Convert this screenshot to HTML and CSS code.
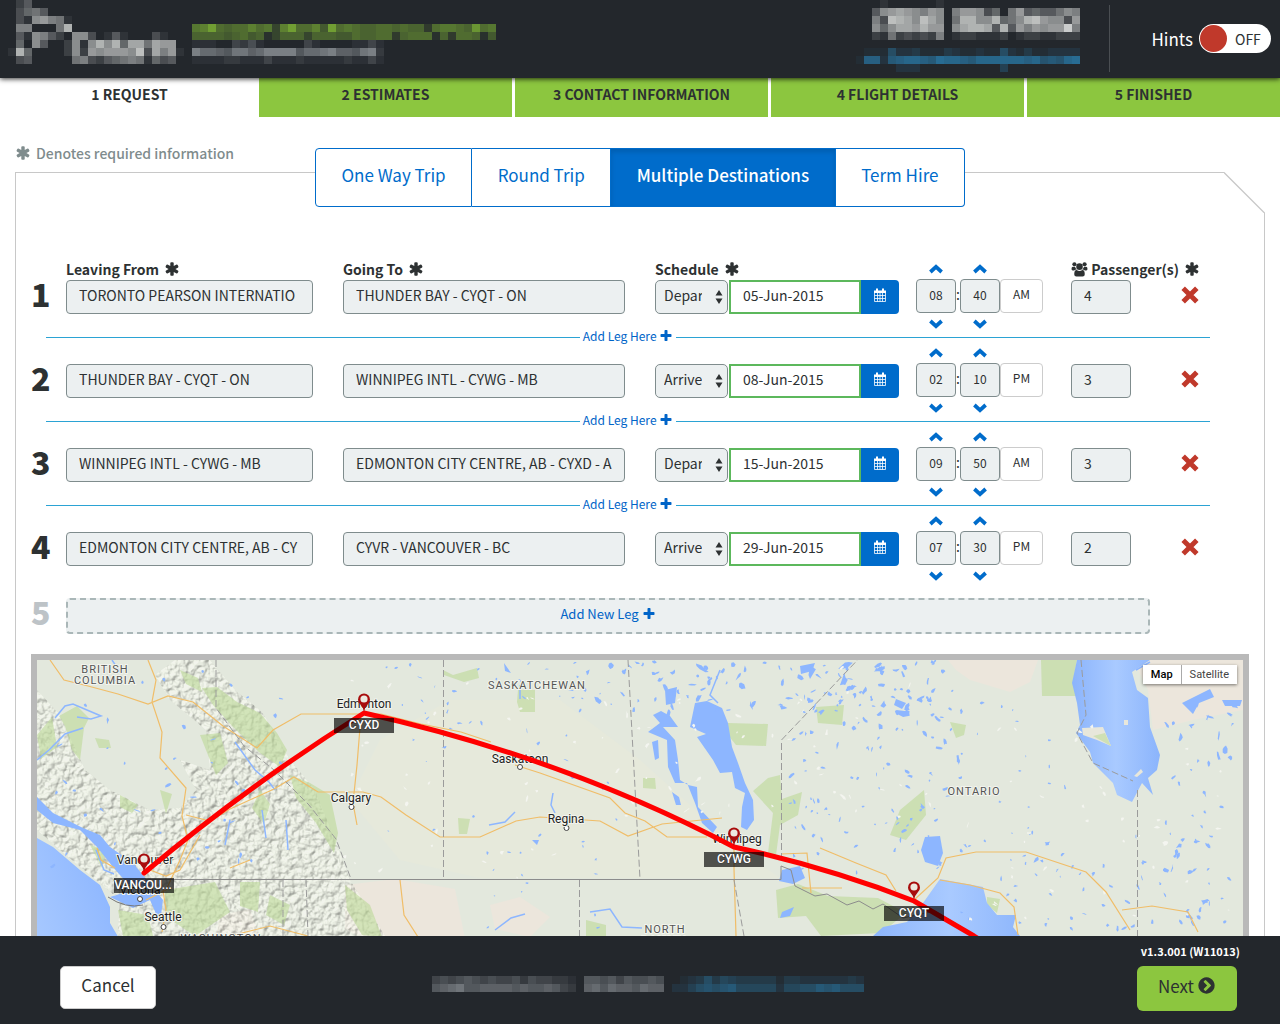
FILE: index.html
```html
<!DOCTYPE html>
<html lang="en">
<head>
<meta charset="utf-8">
<meta name="viewport" content="width=device-width, initial-scale=1">
<title>Flight request</title>
<link rel="stylesheet" href="styles.css">
</head>
<body>
<svg class="sprite" aria-hidden="true">
  <symbol id="asterisk" viewBox="0 0 1792 1792"><path d="M1546 1050q46 26 59.500 77.500t-12.500 97.500l-64 110q-26 46-77.500 59.500t-97.500-12.500l-266-153v307q0 52-38 90t-90 38h-128q-52 0-90-38t-38-90v-307l-266 153q-46 26-97.500 12.500t-77.500-59.500l-64-110q-26-46-12.500-97.500t59.500-77.500l266-154-266-154q-46-26-59.500-77.500t12.500-97.500l64-110q26-46 77.500-59.500t97.500 12.500l266 153v-307q0-52 38-90t90-38h128q52 0 90 38t38 90v307l266-153q46-26 97.500-12.500t77.500 59.500l64 110q26 46 12.500 97.500t-59.500 77.500l-266 154z"/></symbol>
  <symbol id="plus" viewBox="0 0 1792 1792"><path d="M1600 736v192q0 40-28 68t-68 28h-416v416q0 40-28 68t-68 28h-192q-40 0-68-28t-28-68v-416h-416q-40 0-68-28t-28-68v-192q0-40 28-68t68-28h416v-416q0-40 28-68t68-28h192q40 0 68 28t28 68v416h416q40 0 68 28t28 68z"/></symbol>
  <symbol id="remove" viewBox="0 0 16 16"><path d="M3.500 3.500l9 9M12.500 3.500l-9 9" fill="none" stroke="currentColor" stroke-width="4.400" stroke-linecap="square"/></symbol>
  <symbol id="up" viewBox="0 0 12 8"><path d="M1.500 6.400L6 2.300l4.500 4.100" fill="none" stroke="currentColor" stroke-width="3"/></symbol>
  <symbol id="down" viewBox="0 0 12 8"><path d="M1.500 1.600L6 5.700l4.500-4.100" fill="none" stroke="currentColor" stroke-width="3"/></symbol>
  <symbol id="sorter" viewBox="0 0 8 16"><path d="M4 1l3.500 5.500h-7zM4 15l3.500-5.500h-7z"/></symbol>
  <symbol id="calendar" viewBox="0 0 14 15"><path d="M1.500 4v9.500h11V4M1.500 7.500h11M1.500 10.500h11M4.500 4.500v9M7 4.500v9M9.500 4.500v9" fill="none" stroke="currentColor" stroke-width=".8"/><path d="M1 2.500h12v2.500H1zM3 .5h2v3H3zM9 .5h2v3H9z"/></symbol>
  <symbol id="people" viewBox="0 0 18 17"><circle cx="9" cy="6" r="3.500"/><circle cx="3.600" cy="3.500" r="2.200"/><circle cx="14.400" cy="3.500" r="2.200"/><path d="M4.200 6q.8 2.300 2 3-2 0-2.900 1H1.800Q.5 10 .5 8.500.5 6 2 6zM13.800 6q-.8 2.300-2 3 2 0 2.900 1h1.500q1.300 0 1.300-1.500Q17.500 6 16 6zM6 9.500q3 2 6 0 2.600 0 2.600 4.500 0 2.500-2.300 2.500H5.700q-2.300 0-2.300-2.500 0-4.500 2.600-4.500z"/></symbol>
  <symbol id="next" viewBox="0 0 1792 1792"><path d="M845 1395l454-454q19-19 19-45t-19-45l-454-454q-19-19-45-19t-45 19l-102 102q-19 19-19 45t19 45l307 307-307 307q-19 19-19 45t19 45l102 102q19 19 45 19t45-19zm819-499q0 209-103 385.500t-279.500 279.500-385.500 103-385.500-103-279.500-279.500-103-385.500 103-385.500 279.500-279.500 385.500-103 385.500 103 279.500 279.500 103 385.500z"/></symbol>
</svg>

<header class="topbar">
  <svg class="mosaic pale" width="176" height="64" data-rows="0240000000000000000000/0356400000000000000000/0318976100000000000000/0770006b00000000000000/041874208830141000310/05084002818b8b5aa6a99/1b50000282989998c3a791/034000006732456761534"></svg>
  <div class="brand">
    <svg class="mosaic green" width="304" height="16" data-rows="89c767797839c7795c78766776766278876b78797/66665675613666366655766772677716277615"></svg>
    <svg class="mosaic steel" width="192" height="24" data-rows="111003241000003100001131/977658867999957789665892/111122111311121111121131"></svg>
  </div>
  <div class="contact">
    <svg class="mosaic pale" width="208" height="40" data-rows="01000000100000000000000000/489a9879807998350694544687/73cba8ca806bb88b568bc98839/858aa9b9908abba4b4979899d7/21623232701221112012211222"></svg>
    <svg class="mosaic blue" width="224" height="24" data-rows="0111622311132112116213112222/199289aa98baa98aaaaaa9a787ab/0000022200000000004000000000"></svg>
  </div>
  <div class="hints">
    <label for="hints">Hints</label>
    <label class="switch"><input type="checkbox" id="hints"><span>OFF</span></label>
  </div>
</header>

<nav class="steps">
  <a class="step current" href="#request">1 REQUEST</a>
  <a class="step" href="#estimates">2 ESTIMATES</a>
  <a class="step" href="#contact">3 CONTACT INFORMATION</a>
  <a class="step" href="#details">4 FLIGHT DETAILS</a>
  <a class="step" href="#finished">5 FINISHED</a>
</nav>

<main>
  <p class="required"><svg class="icon"><use href="#asterisk"/></svg>Denotes required information</p>
  <section class="panel">
    <svg class="corner" viewBox="0 0 41 41"><path d="M0 0H41V41z" fill="#fff"/><path d="M0 .5L40.500 41" fill="none" stroke="#c8c8c8" stroke-width="1.300"/></svg>
    <div class="tabs">
      <button type="button">One Way Trip</button>
      <button type="button">Round Trip</button>
      <button type="button" class="active">Multiple Destinations</button>
      <button type="button">Term Hire</button>
    </div>

    <form class="legs">
      <div class="leg">
        <strong class="num">1</strong>
        <div class="field"><label for="from1">Leaving From <svg class="icon"><use href="#asterisk"/></svg></label><input id="from1" type="text" value="TORONTO PEARSON INTERNATIO"></div>
        <div class="field"><label for="to1">Going To <svg class="icon"><use href="#asterisk"/></svg></label><input id="to1" type="text" value="THUNDER BAY - CYQT - ON"></div>
        <div class="when">
          <div class="schedule"><label for="date1">Schedule <svg class="icon"><use href="#asterisk"/></svg></label>
            <div class="row"><span class="pick"><select aria-label="Depart or arrive"><option>Depart</option><option>Arrive</option></select><svg><use href="#sorter"/></svg></span><input id="date1" class="date" type="text" value="05-Jun-2015"><button type="button" class="cal" aria-label="Open calendar"><svg><use href="#calendar"/></svg></button></div></div>
          <div class="time">
            <div class="spin"><button type="button" aria-label="Hour up"><svg><use href="#up"/></svg></button><input type="text" aria-label="Hour" value="08"><button type="button" aria-label="Hour down"><svg><use href="#down"/></svg></button></div>
            <span class="colon">:</span>
            <div class="spin"><button type="button" aria-label="Minute up"><svg><use href="#up"/></svg></button><input type="text" aria-label="Minute" value="40"><button type="button" aria-label="Minute down"><svg><use href="#down"/></svg></button></div>
            <button type="button" class="ampm">AM</button>
          </div>
        </div>
        <div class="pax"><label for="pax1"><svg class="people"><use href="#people"/></svg> Passenger(s) <svg class="icon"><use href="#asterisk"/></svg></label><div class="row"><input id="pax1" type="text" value="4"><button type="button" class="remove" aria-label="Remove leg"><svg><use href="#remove"/></svg></button></div></div>
      </div>
      <div class="insert"><button type="button">Add Leg Here <svg class="plus"><use href="#plus"/></svg></button></div>

      <div class="leg">
        <strong class="num">2</strong>
        <div class="field"><input type="text" aria-label="Leaving from" value="THUNDER BAY - CYQT - ON"></div>
        <div class="field"><input type="text" aria-label="Going to" value="WINNIPEG INTL - CYWG - MB"></div>
        <div class="when">
          <div class="schedule">
            <div class="row"><span class="pick"><select aria-label="Depart or arrive"><option>Depart</option><option selected>Arrive</option></select><svg><use href="#sorter"/></svg></span><input class="date" type="text" aria-label="Date" value="08-Jun-2015"><button type="button" class="cal" aria-label="Open calendar"><svg><use href="#calendar"/></svg></button></div></div>
          <div class="time">
            <div class="spin"><button type="button" aria-label="Hour up"><svg><use href="#up"/></svg></button><input type="text" aria-label="Hour" value="02"><button type="button" aria-label="Hour down"><svg><use href="#down"/></svg></button></div>
            <span class="colon">:</span>
            <div class="spin"><button type="button" aria-label="Minute up"><svg><use href="#up"/></svg></button><input type="text" aria-label="Minute" value="10"><button type="button" aria-label="Minute down"><svg><use href="#down"/></svg></button></div>
            <button type="button" class="ampm">PM</button>
          </div>
        </div>
        <div class="pax"><div class="row"><input type="text" aria-label="Passengers" value="3"><button type="button" class="remove" aria-label="Remove leg"><svg><use href="#remove"/></svg></button></div></div>
      </div>
      <div class="insert"><button type="button">Add Leg Here <svg class="plus"><use href="#plus"/></svg></button></div>

      <div class="leg">
        <strong class="num">3</strong>
        <div class="field"><input type="text" aria-label="Leaving from" value="WINNIPEG INTL - CYWG - MB"></div>
        <div class="field"><input type="text" aria-label="Going to" value="EDMONTON CITY CENTRE, AB - CYXD - AB"></div>
        <div class="when">
          <div class="schedule">
            <div class="row"><span class="pick"><select aria-label="Depart or arrive"><option>Depart</option><option>Arrive</option></select><svg><use href="#sorter"/></svg></span><input class="date" type="text" aria-label="Date" value="15-Jun-2015"><button type="button" class="cal" aria-label="Open calendar"><svg><use href="#calendar"/></svg></button></div></div>
          <div class="time">
            <div class="spin"><button type="button" aria-label="Hour up"><svg><use href="#up"/></svg></button><input type="text" aria-label="Hour" value="09"><button type="button" aria-label="Hour down"><svg><use href="#down"/></svg></button></div>
            <span class="colon">:</span>
            <div class="spin"><button type="button" aria-label="Minute up"><svg><use href="#up"/></svg></button><input type="text" aria-label="Minute" value="50"><button type="button" aria-label="Minute down"><svg><use href="#down"/></svg></button></div>
            <button type="button" class="ampm">AM</button>
          </div>
        </div>
        <div class="pax"><div class="row"><input type="text" aria-label="Passengers" value="3"><button type="button" class="remove" aria-label="Remove leg"><svg><use href="#remove"/></svg></button></div></div>
      </div>
      <div class="insert"><button type="button">Add Leg Here <svg class="plus"><use href="#plus"/></svg></button></div>

      <div class="leg">
        <strong class="num">4</strong>
        <div class="field"><input type="text" aria-label="Leaving from" value="EDMONTON CITY CENTRE, AB - CY"></div>
        <div class="field"><input type="text" aria-label="Going to" value="CYVR - VANCOUVER - BC"></div>
        <div class="when">
          <div class="schedule">
            <div class="row"><span class="pick"><select aria-label="Depart or arrive"><option>Depart</option><option selected>Arrive</option></select><svg><use href="#sorter"/></svg></span><input class="date" type="text" aria-label="Date" value="29-Jun-2015"><button type="button" class="cal" aria-label="Open calendar"><svg><use href="#calendar"/></svg></button></div></div>
          <div class="time">
            <div class="spin"><button type="button" aria-label="Hour up"><svg><use href="#up"/></svg></button><input type="text" aria-label="Hour" value="07"><button type="button" aria-label="Hour down"><svg><use href="#down"/></svg></button></div>
            <span class="colon">:</span>
            <div class="spin"><button type="button" aria-label="Minute up"><svg><use href="#up"/></svg></button><input type="text" aria-label="Minute" value="30"><button type="button" aria-label="Minute down"><svg><use href="#down"/></svg></button></div>
            <button type="button" class="ampm">PM</button>
          </div>
        </div>
        <div class="pax"><div class="row"><input type="text" aria-label="Passengers" value="2"><button type="button" class="remove" aria-label="Remove leg"><svg><use href="#remove"/></svg></button></div></div>
      </div>

      <div class="newleg">
        <strong class="num">5</strong>
        <button type="button">Add New Leg <svg class="plus"><use href="#plus"/></svg></button>
      </div>
    </form>

    <div class="map">
      <svg class="chart" viewBox="37 660 1206 400" preserveAspectRatio="xMidYMin slice" role="img" aria-label="Route map">
        <defs>
          <filter id="relief" x="0" y="0" width="1" height="1" color-interpolation-filters="sRGB"><feTurbulence type="fractalNoise" baseFrequency=".15" numOctaves="3" seed="4"/><feColorMatrix values="0 0 0 0 0 0 0 0 0 0 0 0 0 0 0 1.500 0 0 0 0"/><feDiffuseLighting surfaceScale="2" diffuseConstant="1.080" lighting-color="#f2f5ea"><feDistantLight azimuth="225" elevation="64"/></feDiffuseLighting><feComposite in2="SourceGraphic" operator="in"/></filter>
          <linearGradient id="sea" x1="1" y1="0" x2="0" y2="1"><stop offset="0" stop-color="#86b1ff"/><stop offset="1" stop-color="#b3d1ff"/></linearGradient>
          <linearGradient id="bay"><stop offset="0" stop-color="#8bb4fc"/><stop offset=".5" stop-color="#a9caff"/><stop offset="1" stop-color="#8bb4fc"/></linearGradient>
          <g id="pin"><path d="M0 0Q-1-5-4-8A6 6 0 1 1 4-8Q1-5 0 0z" fill="#a80d0d"/><circle cy="-13" r="3.600" fill="#ece9e0"/></g>
        </defs>
        <rect x="37" y="660" width="1206" height="400" fill="#e3e8dd"/>
        <path d="M380 740L450 700 560 700 640 760 740 850 780 878H480L400 860 350 800z" fill="#e6e9db"/>
        <path d="M345 885l50-6 60 10 10 50-60 20-60-30zM490 905l30-8 30 20-20 20-35-8zM220 915l30-6 10 30h-45zM948 660h90l-8 22-20 10-40-12-14-10zM1150 660h93v50l-50 10-40 10-5-40-10-20z" fill="#ece6dc"/>
        <path d="M37 690L60 715 85 770 110 790 150 810 180 808 196 790 180 760 210 770 206 730 170 700 155 675 175 660H210L235 690 262 712 290 760 315 790 335 840 350 880 385 936V1060H110L120 900 60 850 37 830z" filter="url(#relief)" opacity=".55"/>
        <g fill="#bcd898" fill-opacity=".6">
          <path d="M202 688l15-1 20 15 23 11 17 20 10 17-7 17-20-14-27-26-20-22z"/><path d="M290 775l20 8 20 12 8 38-4 20-18-30-20-25z"/><path d="M59 716l18-10 12 12-5 10-4 32-8-10-7-24z"/><path d="M200 735l20-2 8 30-12 12-10-25z"/><path d="M165 890l50-8 15 30-35 24-30-20zM345 885l25 20 12 32-20-2-15-25zM118 910l30 5 5 21h-30zM270 895l20 10-6 20-18-10zM240 882l20 0-2 30-18-6z"/>
          <path d="M518 690h17v22h-15l-3-10zM443 670l10 5 24-7 2 10-15 4-20-7zM728 723l40 1-2 22-30-1-8-10zM643 778l12 0 1 11-13-1zM458 818l12 1-3 15h-8zM1041 660h36l-4 22 3 14h-34zM816 707l28-2-2 20-24-2zM950 722l16 3-2 10-8 3zM890 835l10-25 24-20 2 25-20 25zM768 778l12-3 2 24 20-7-4 23-18 10-4 30-8-2 5-40-20-22z"/>
          <path d="M776 890l22-6 30 12 50 2 28 15-25 20-60 3-15-20-28 2zM987 897l13 2-3 14-10-8zM586 920l20 5v12h-20zM37 735l15-18 5 30-16 12zM90 845l16 5-4 18zM160 790l12 4-6 20zM180 670l18 8 4 14-16-8zM120 795l18 10-6 8-12-6zM260 790l10 14-6 20-12-16zM95 738l14 2 2 8-12 0z"/>
        </g>
        <path fill="url(#sea)" d="M37 838l16 9 27 23 20 15 10 22v16l10 17 5 120H37z"/>
        <path fill="#8db6ff" d="M37 797l16 16 30 15 17 7 10 12 23 16 14 17 16 20-3 23-10-23-17 8-23-11 23-7-20-23-16-20-17-17-27-7-16-13z"/>
        <g fill="#8db6ff">
          <path d="M695 703l12-2 15 7 6 15 4 24 6 16 7 20 8 17 1 20-7 10-6-3 1-20 3-14-10-5-3-16-12 1-7-13-16-23 9-3-16-7z"/>
          <path d="M653 715l8-4 9 5 8 11-15 0 12 13 3 20 2 20 8 5 9 2 1 20 19 20-4 6-11-10-7-20-8-20-12 0-7-16-1-27-19-8 12-9zM665 690l12-3-2 16-9 2zM652 742l6-2 1 18-4 2zM672 792l7 5 2 8-5 0z"/>
          <path d="M925 837l15-1 3 17-5 13-13-4-4-12z"/>
          <path d="M782 870l18-4 5 12-12 6-14-3zM782 912l12-5-4 9-10 2zM1182 703l28-14 4 8-15 6-6 11zM1222 700l20 0-2 6-15 0zM896 699l10 4-4 6-8-4zM504 663l7 10-6-2zM800 666l15-3-3 8-11 3zM532 840l7 0-2 5zM568 773l14 3-10 3z"/>
        </g>
        <path fill="url(#bay)" d="M1077 660h73l-18 12 5 18 11 8 2 29 10 28-3 15-9 8 5 17-11-12-10 19-15-7-4-12-20-20-3-11-14-19 4-8-3-22-5-20z"/>
        <path fill="url(#bay)" d="M940 879l43 8 4 16 10 12 19 0-3 12 7 9 10 24H870l3-24 10-9 24-5 16-19z"/>
        <path fill="#e8e7db" d="M1082 728l21-1 8 19-14-6-14-5zM1134 776l7-7 2 3-6 5zM1124 720h4v5h-4z"/><path fill="#cfe0b4" d="M1093 736l12-3 6 13z"/>
        <g id="lakes" fill="#8db6ff"></g><g id="snow" fill="#f4f5f0"></g>
        <g fill="none" stroke="#8db6ff" stroke-width="1.500"><path d="M55 718l10-12 8-2 28 12-10 3-14-2M112 660l8 12M235 742l20 28 14 12 6 8M262 810l4 28M286 820l2 30M520 685v14M553 793l-2 12 4 8M515 812l-10 10-16 3M590 912l20-3 12 18 20 1M495 930l16-12 14-4M720 670l-10 25 8 8M1150 662l-14 8"/><path d="M37 760l12-10 16-16 18-6M230 820l-5 25M96 850l8 20 10 4"/></g>
        <g fill="none" stroke="#f0bd68" stroke-width="1.200">
          <path d="M50 660l14 20 24 6 30 8 30 10 20-8 25 6 30 24 34 22 16-18 28-16h80l40 10 40 8 30 10M148 660l8 20-4 22 10 30-2 26 26 30-4 28 6 24-8 20-14 30-20 10"/>
          <path d="M361 715l-4 50-4 38 4 22M186 815l24 6 20-12 44-20 20-12 24 15h45l18 5 25 18 34 22h40l36-16 24-4 60 4 28 15 34-12 60-6M150 870l16 6 14-6 20-35M515 765l25 8 70 25 15 15 20 8 22 16h40M734 849v20l2 67M781 854l26-1 4 40M820 848l36 15 30 12 10 16M914 900l24-22 8-20 30-6 50 0 60 20 20 20 24 38M940 880l30 5 30 8 14 14 4 28M1122 910l30-4 36 6 10 20M250 860l-20 8M97 848l4 12 14 8M163 890l3 20-4 22M400 880l4 35 14 22M230 936l40-10 38 10M802 888h40"/>
        </g>
        <g fill="none" stroke="#9b9b9b"><path d="M145 879.500H781V866l10 4 4 16 20 10 12-2 20 11 12-4 14 8 10-5 20 14 32-7 60 36" stroke="#8c8c8c"/><path d="M216 660v48l28 38 30 24 35 35 27 34 15 40M443.500 660v219M628 660l12 219M781.500 860V740l76-80M579.500 880v56M734 880l10 56M283 880v56M306 880l2 56M1137.500 790v150M1081 660l5 55-9 18 16 30 40 18" stroke-dasharray="7 3"/></g>
        <path d="M108 897q18 12 35 8" fill="none" stroke="#777"/>
        <g class="province"><text x="105" y="673">BRITISH</text><text x="105" y="684">COLUMBIA</text><text x="537" y="689">SASKATCHEWAN</text><text x="974" y="795">ONTARIO</text><text x="221" y="942">WASHINGTON</text><text x="665" y="933">NORTH</text><text x="665" y="944">DAKOTA</text></g>
        <g fill="#fff" stroke="#444"><circle cx="351.500" cy="807" r="2.500"/><circle cx="520" cy="767" r="2.500"/><circle cx="566.500" cy="828" r="2.500"/><circle cx="140" cy="899" r="2.500"/><circle cx="163.500" cy="927" r="2.500"/></g>
        <g class="city"><text x="364" y="708">Edmonton</text><text x="351" y="802">Calgary</text><text x="520" y="763">Saskatoon</text><text x="566" y="823">Regina</text><text x="737" y="843">Winnipeg</text><text x="145" y="864">Vancouver</text><text x="140" y="894">Victoria</text><text x="163" y="921">Seattle</text></g>
        <path d="M144 873Q250 784 364 713Q565 758 734 847Q830 868 914 901L974 936 1060 990" fill="none" stroke="red" stroke-width="5" stroke-linejoin="round" stroke-linecap="round"/>
        <use href="#pin" x="364" y="712"/><use href="#pin" x="734" y="846"/><use href="#pin" x="144" y="872"/><use href="#pin" x="914" y="900"/>
        <g fill="#000" fill-opacity=".66"><path d="M334 718h60v15h-60zM704 852h60v15h-60zM114 878h60v15h-60zM884 906h60v15h-60z"/></g>
        <g class="airport"><text x="364" y="729">CYXD</text><text x="734" y="863">CYWG</text><text x="143" y="889">VANCOU...</text><text x="914" y="917">CYQT</text></g>
      </svg>
      <div class="maptype"><button type="button" class="on">Map</button><button type="button">Satellite</button></div>
    </div>
  </section>
</main>

<footer class="bottombar">
  <button type="button" class="cancel">Cancel</button>
  <div class="support">
    <svg class="mosaic steel" width="232" height="16" data-rows="34345434334243322105545354454/56785566665655653206757665766"></svg>
    <svg class="mosaic blue" width="192" height="16" data-rows="012363543333313322222232/224676785555525566878666"></svg>
  </div>
  <div class="forward"><span>v1.3.001 (W11013)</span><button type="button">Next <svg><use href="#next"/></svg></button></div>
</footer>
<script src="page.js"></script>
</body>
</html>
```
FILE: styles.css
```css
* { box-sizing: border-box; }
body {
  margin: 0;
  height: 100vh;
  display: flex;
  flex-direction: column;
  background: #fff;
  color: #2d3132;
  font: 14px/20px "Noto Sans CJK SC", "Open Sans", sans-serif;
}
button, input, select { font: inherit; color: inherit; margin: 0; }
button { cursor: pointer; background: none; border: 0; padding: 0; }
svg { display: block; fill: currentColor; }
.sprite { position: absolute; width: 0; height: 0; }
.icon { display: inline-block; width: 16px; height: 16px; vertical-align: -2px; }
.plus { display: inline-block; width: 14px; height: 14px; vertical-align: -2px; }
.mosaic { flex: none; shape-rendering: crispEdges; }
.pale { fill: #e4e6e4; }
.green { fill: #84bd36; }
.steel { fill: #b4babf; }
.blue { fill: #2a86ba; }

.topbar {
  position: relative;
  z-index: 2;
  flex: none;
  display: flex;
  height: 78px;
  padding: 0 9px 0 8px;
  background: #23272c;
  color: #fff;
  box-shadow: 0 1px 5px rgba(0, 0, 0, .8);
}
.brand { padding: 24px 0 0 8px; }
.contact {
  display: flex;
  flex-direction: column;
  align-items: flex-end;
  gap: 8px;
  margin-left: auto;
  padding-right: 29px;
}
.hints {
  display: flex;
  align-items: center;
  gap: 6px;
  height: 67px;
  margin-top: 5px;
  padding-left: 41px;
  border-left: 1px solid #4a4e52;
  font-size: 17px;
}
.switch {
  display: flex;
  align-items: center;
  gap: 8px;
  width: 72px;
  height: 29px;
  padding-left: 1px;
  border-radius: 15px;
  background: #fff;
  color: #2d3132;
  font-size: 14px;
}
.switch input { appearance: none; width: 27px; height: 27px; border-radius: 50%; background: #c0392b; }

.steps { flex: none; display: flex; height: 39px; }
.step {
  flex: 1;
  padding-top: 6px;
  border-left: 3px solid #fff;
  background: #8cc63f;
  color: #2d3132;
  font-weight: 700;
  text-align: center;
  text-decoration: none;
}
.step.current { background: #fff; }

main { flex: 1; min-height: 0; padding: 0 15px; overflow-y: auto; scrollbar-width: none; }
.required { height: 55px; margin: 0; padding-top: 26px; color: #7f8c8d; font-weight: 500; }
.required .icon { margin-right: 5px; }
.panel { position: relative; padding: 0 15px 15px; border: 1px solid #c8c8c8; border-bottom: 0; }
.corner { position: absolute; top: -1px; right: -1px; width: 41px; height: 41px; }

.tabs { display: flex; max-width: 650px; margin: -25px auto 0; }
.tabs button {
  flex: 1 0 auto;
  height: 59px;
  padding: 0 24px 6px;
  border: 1px solid #006ccb;
  border-left-width: 0;
  background: #fff;
  color: #006ccb;
  font-size: 17px;
}
.tabs button:first-child { border-left-width: 1px; border-radius: 4px 0 0 4px; }
.tabs button:last-child { border-radius: 0 4px 4px 0; }
.tabs .active { background: #006ccb; color: #fff; font-weight: 500; box-shadow: inset 0 3px 5px rgba(0, 0, 0, .13); }

.legs { margin: 54px 39px 0 0; }
.leg {
  display: grid;
  grid-template-columns: 35px minmax(0, 277fr) minmax(0, 312fr) 416px 139px;
  align-items: end;
  height: 68px;
  padding-bottom: 15px;
}
.num { padding-bottom: 4px; font-size: 32px; line-height: 34px; font-weight: 900; }
.field { padding-right: 30px; }
.leg label { display: block; height: 19px; line-height: 12px; font-weight: 700; white-space: nowrap; }
.leg label .icon { margin-left: 2px; }
.leg input {
  display: block;
  width: 100%;
  height: 34px;
  padding: 0 12px 4px;
  border: 1px solid #7f8c8d;
  border-radius: 4px;
  background: #ecf0f1;
}
.row { display: flex; }
.when { display: flex; align-items: flex-end; gap: 17px; }
.pick { position: relative; margin-right: 1px; }
.pick select {
  appearance: none;
  display: block;
  width: 73px;
  height: 34px;
  padding: 0 25px 4px 8px;
  border: 1px solid #7f8c8d;
  border-radius: 5px;
  background: #ecf0f1;
}
.pick svg { position: absolute; top: 9px; right: 5px; width: 8px; height: 16px; pointer-events: none; }
.leg .date { width: 132px; border: 2px solid #5cb85c; border-radius: 0; background: #fff; }
.cal { display: grid; place-content: center; width: 38px; height: 34px; padding-bottom: 4px; border-radius: 0 4px 4px 0; background: #006ccb; color: #fff; }
.cal svg { width: 14px; height: 15px; }
.time { display: flex; align-items: center; height: 68px; margin-bottom: -15px; }
.spin { width: 40px; }
.spin button { display: grid; place-items: center; width: 100%; height: 16px; color: #006ccb; }
.spin button:first-child { height: 18px; padding-bottom: 2px; }
.spin button:last-child { padding-top: 6px; }
.spin svg { width: 16px; height: 10px; }
.leg .spin input { padding: 0 0 4px; font-size: 12px; text-align: center; }
.colon { width: 4px; padding-bottom: 2px; text-align: center; }
.ampm { width: 43px; height: 34px; margin-top: 2px; padding-bottom: 4px; border: 1px solid #ccc; border-radius: 4px; font-size: 12px; }
.leg .pax input { width: 60px; }
.people { display: inline-block; width: 17px; height: 16px; vertical-align: -2px; }
.remove { margin-left: 50px; padding-bottom: 4px; color: #c0392b; }
.remove svg { width: 18px; height: 18px; }

.insert { display: flex; align-items: center; gap: 3px; height: 16px; margin-left: 15px; }
.insert::before, .insert::after { content: ""; flex: 1; height: 1px; background: #2ba3d4; }
.insert button { height: 16px; padding-bottom: 2px; font-size: 12px; line-height: 14px; color: #0064c8; }
.newleg { display: flex; margin: 17px 60px 20px 0; }
.newleg .num { width: 35px; color: #bdc3c7; line-height: 26px; }
.newleg button { flex: 1; height: 36px; padding-bottom: 5px; border: 2px dashed #aab7b8; border-radius: 4px; background: #ecf0f1; color: #0064c8; font-size: 13px; }

.map { position: relative; border: 6px solid #b9b9b9; }
.chart { width: 100%; height: 400px; font-family: Roboto, sans-serif; text-anchor: middle; }
.chart text { paint-order: stroke; stroke: #f2f4ee; stroke-width: 2px; }
.province { font-size: 11px; letter-spacing: 1px; fill: #555; }
.city { font-size: 12px; fill: #222; }
.airport { font-size: 12px; font-weight: 500; fill: #fff; }
.chart .airport text { stroke: #333; stroke-width: 1px; }
.maptype { position: absolute; top: 5px; right: 6px; display: flex; background: #fff; box-shadow: 0 1px 3px rgba(0, 0, 0, .5); }
.maptype button { height: 19px; padding: 0 8px; font: 11px/19px Roboto, sans-serif; color: #444; }
.maptype .on { border-right: 1px solid #aaa; color: #000; font-weight: 500; }

.bottombar {
  flex: none;
  display: flex;
  justify-content: space-between;
  align-items: flex-start;
  height: 88px;
  padding: 0 43px 0 60px;
  background: #23272c;
}
.support { display: flex; gap: 8px; padding: 40px 0 0 2px; }
.cancel { width: 96px; height: 43px; margin-top: 30px; padding-bottom: 6px; border: 1px solid #ccc; border-radius: 5px; background: #fff; font-size: 17px; }
.forward { display: flex; flex-direction: column; align-items: flex-end; }
.forward span { margin-right: -3px; padding-top: 5px; height: 30px; color: #fff; font-size: 11px; font-weight: 700; }
.forward button { display: flex; align-items: center; justify-content: center; gap: 3px; width: 100px; height: 45px; padding-bottom: 6px; border-radius: 6px; background: #8cc63f; font-size: 17px; }
.forward svg { width: 19px; height: 19px; }
```
FILE: page.js
```js
const NS = "http://www.w3.org/2000/svg";

// Redacted text: rows of hex digits, one 8px cell per digit.
document.querySelectorAll(".mosaic").forEach(svg => {
  svg.dataset.rows.split("/").forEach((row, y) => [...row].forEach((c, x) => {
    if (c === "0") return;
    const r = document.createElementNS(NS, "rect");
    const attrs = { x: x * 8, y: y * 8, width: 8, height: 8, "fill-opacity": parseInt(c, 16) / 15 };
    for (const k in attrs) r.setAttribute(k, attrs[k]);
    svg.append(r);
  }));
});

// Small lakes and pale patches, scattered with a fixed seed.
let seed = 7;
const rnd = () => (seed = (seed * 16807) % 2147483647) / 2147483647;
function scatter(id, count, x0, y0, w, h, size) {
  for (let i = 0; i < count; i++) {
    const x = x0 + rnd() * w, y = y0 + rnd() * h;
    const rx = size * (.3 + rnd() * .7), ry = size * (.15 + rnd() * .4);
    const turn = rnd() * 3;
    let d = "";
    for (let j = 0; j < 7; j++) {
      const a = j * Math.PI * 2 / 7, k = .4 + rnd() * .8;
      const u = Math.cos(a) * rx * k, v = Math.sin(a) * ry * k;
      d += (j ? "L" : "M") + (x + u * Math.cos(turn) - v * Math.sin(turn)).toFixed(1) + " " + (y + u * Math.sin(turn) + v * Math.cos(turn)).toFixed(1);
    }
    const p = document.createElementNS(NS, "path");
    p.setAttribute("d", d + "z");
    document.getElementById(id).append(p);
  }
}
scatter("lakes", 110, 580, 660, 370, 55, 5);
scatter("lakes", 110, 785, 690, 180, 190, 4);
scatter("lakes", 8, 680, 665, 240, 50, 9);
scatter("lakes", 40, 380, 662, 240, 90, 3);
scatter("lakes", 25, 380, 760, 240, 170, 3);
scatter("lakes", 50, 1165, 700, 72, 230, 5);
scatter("lakes", 35, 960, 700, 110, 230, 3);
scatter("lakes", 35, 1030, 830, 180, 100, 4);
scatter("lakes", 45, 45, 670, 240, 200, 4);
scatter("snow", 50, 600, 665, 330, 180, 4);
scatter("snow", 35, 330, 680, 260, 200, 4);
scatter("snow", 40, 960, 720, 270, 200, 4);
```
